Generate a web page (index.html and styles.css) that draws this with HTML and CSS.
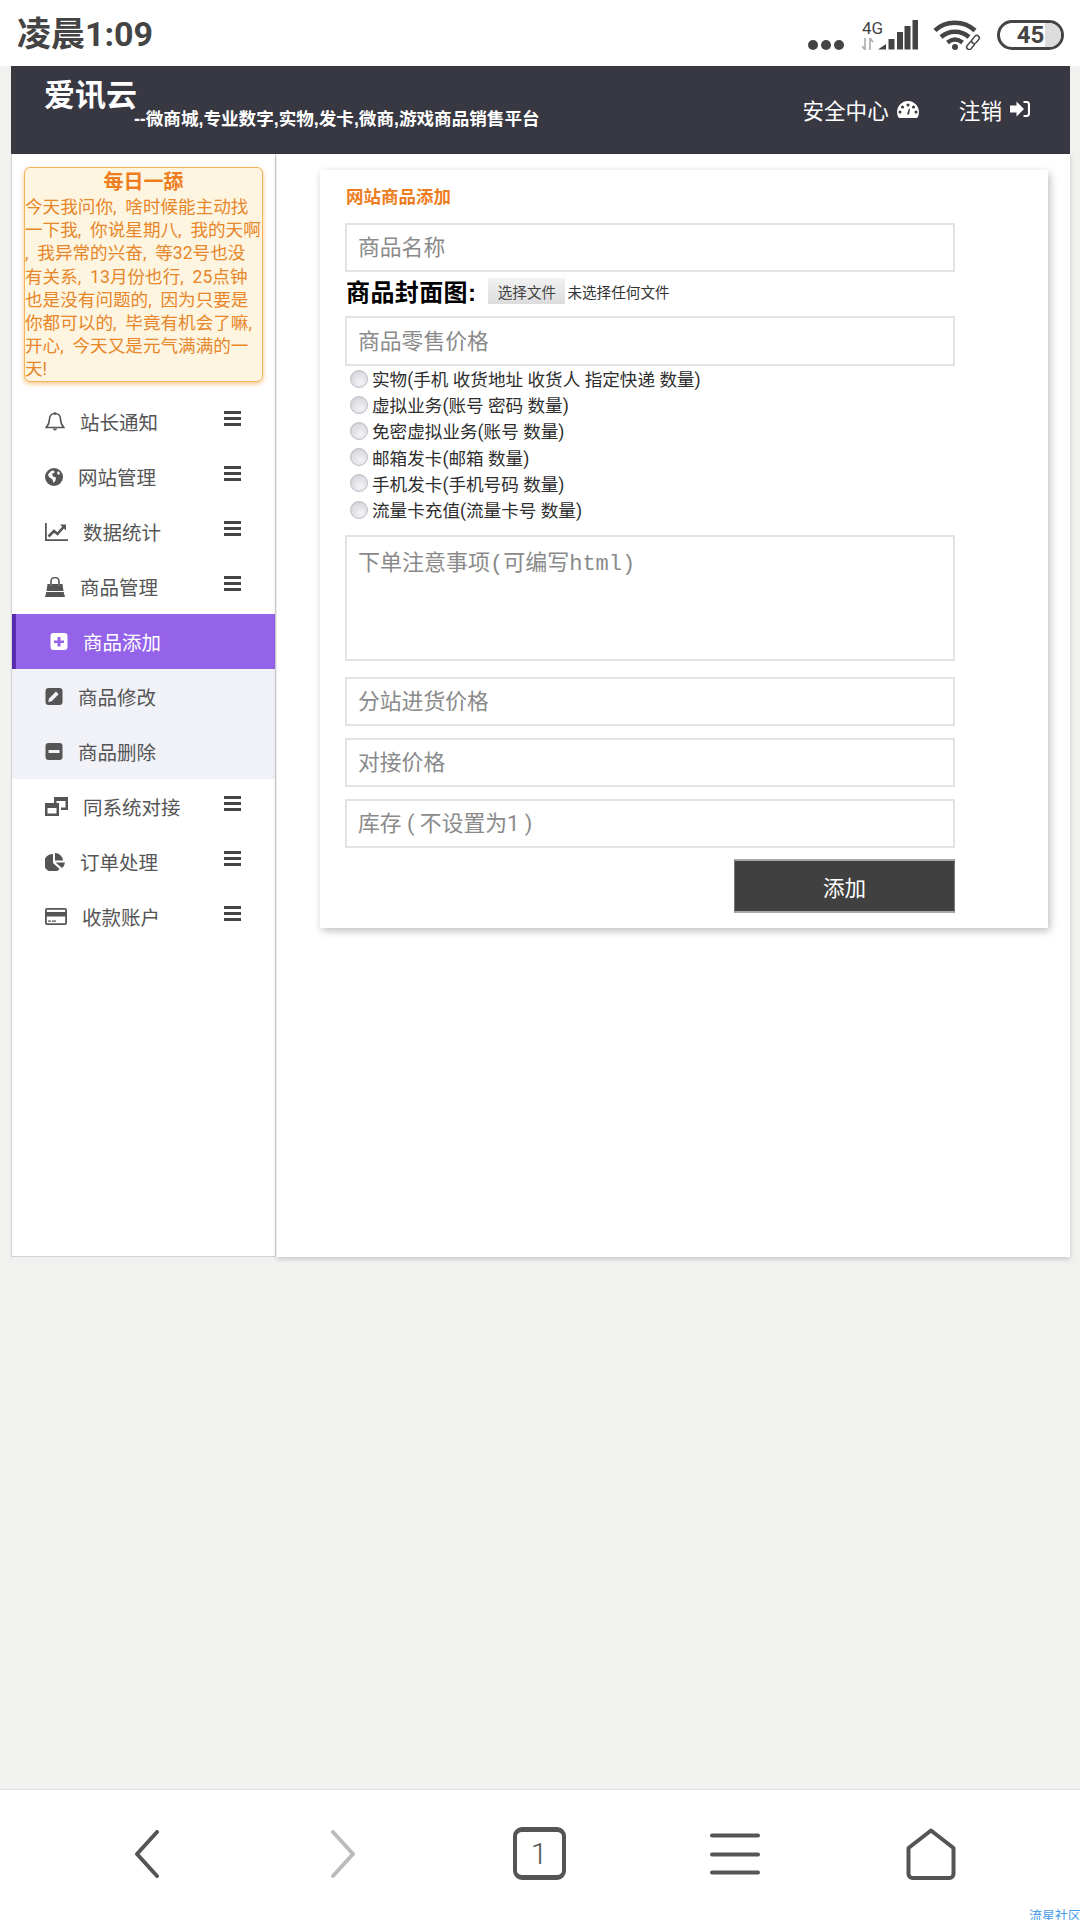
FILE: index.html
```html
<!DOCTYPE html>
<html lang="zh-CN">
<head>
<meta charset="utf-8">
<title>网站商品添加</title>
<link rel="stylesheet" href="styles.css">
</head>
<body>
<svg class="defs" width="0" height="0" aria-hidden="true">
  <symbol id="bars" viewBox="0 0 17 15"><path d="M0 0h17v3H0zM0 6h17v3H0zM0 12h17v3H0z"/></symbol>
</svg>

<div class="status">
  <div class="clock">凌晨1:09</div>
  <div class="status-icons">
    <svg class="dots" viewBox="0 0 36 10"><circle cx="5" cy="5" r="5"/><circle cx="18" cy="5" r="5"/><circle cx="31" cy="5" r="5"/></svg>
    <div class="net">
      <div class="net-left">
        <span class="g4">4G</span>
        <svg class="arrows" viewBox="0 0 12 12"><path d="M3 0v12L0 8M8 12V0l3 4" fill="none" stroke="#aaa" stroke-width="1.6"/></svg>
      </div>
      <svg class="signal" viewBox="0 0 40 30"><path d="M0 29.500 8 24v5.500zM10.500 19h6v10.500h-6zM19 12h6v17.500h-6zM26.500 6h6v23.500h-6zM34.500 0h5.500v29.500h-5.500z"/></svg>
    </div>
    <svg class="wifi" viewBox="0 0 48 30">
      <g fill="none" stroke="#444" stroke-width="4.500">
        <path d="M2 10.500C12 0 31 0 42 10.500"/>
        <path d="M8 17c8-7 20-7 28 0"/>
        <path d="M14.500 22.500c5-4 10-4 15 0"/>
      </g>
      <circle cx="22" cy="27" r="3" fill="#444"/>
      <g fill="#fff" stroke="#444" stroke-width="1.500">
        <rect x="33" y="23" width="9" height="5" rx="2.500" transform="rotate(-50 37.500 25.500)"/>
        <rect x="38" y="17" width="9" height="5" rx="2.500" transform="rotate(-50 42.500 19.500)"/>
      </g>
    </svg>
    <div class="battery"><span class="battery-fill"></span><span class="battery-num">45</span></div>
  </div>
</div>

<div class="content">
  <div class="app">
    <header class="topbar">
      <div class="brand">
        <span class="brand-name">爱讯云</span><span class="brand-sub">--微商城,专业数字,实物,发卡,微商,游戏商品销售平台</span>
      </div>
      <nav class="top-links">
        <a class="top-link">安全中心
          <svg class="ti ti-dash" viewBox="0 0 22 17"><path fill-rule="evenodd" d="M11 0a11 11 0 0 1 9.500 16.500 1 1 0 0 1-.9.500H2.400a1 1 0 0 1-.9-.500A11 11 0 0 1 11 0zM11 2.500a1.500 1.500 0 1 0 0 3 1.500 1.500 0 0 0 0-3zM5.500 4.500a1.500 1.500 0 1 0 0 3 1.500 1.500 0 0 0 0-3zM16.500 4.500a1.500 1.500 0 1 0 0 3 1.500 1.500 0 0 0 0-3zM3 9.500a1.500 1.500 0 1 0 0 3 1.500 1.500 0 0 0 0-3zM19 9.500a1.500 1.500 0 1 0 0 3 1.500 1.500 0 0 0 0-3zM10 13.500h2L13 8l-1.200-.2z"/></svg>
        </a>
        <a class="top-link">注销
          <svg class="ti ti-sign" viewBox="0 0 20 16"><path d="M0 4.500h6.500V.5L14 8l-7.500 7.500v-4H0z"/><path d="M13.500 1h3A2.500 2.500 0 0 1 19 3.500v9a2.500 2.500 0 0 1-2.500 2.500h-3" fill="none" stroke="#fff" stroke-width="2.200"/></svg>
        </a>
      </nav>
    </header>

    <div class="workspace">
      <aside class="sidebar">
        <div class="notice">
          <div class="notice-title">每日一舔</div>
          <p class="notice-text">今天我问你, 啥时候能主动找<br>一下我, 你说星期八, 我的天啊<br>, 我异常的兴奋, 等32号也没<br>有关系, 13月份也行, 25点钟<br>也是没有问题的, 因为只要是<br>你都可以的, 毕竟有机会了嘛,<br>开心, 今天又是元气满满的一<br>天!</p>
        </div>
        <ul class="menu">
          <li class="item">
            <svg class="ic ic-bell" viewBox="0 0 20 20"><path d="M10 1.500c-3.500 0-5.500 2.500-5.500 5.500 0 4.500-1.500 6.500-3.300 8.500h17.600c-1.800-2-3.300-4-3.300-8.500 0-3-2-5.500-5.500-5.500z" fill="none" stroke="#555" stroke-width="1.600"/><path d="M8 16.500a2 2 0 0 0 4 0z"/><circle cx="10" cy="1.500" r="1.300"/></svg>
            <span>站长通知</span><svg class="bars"><use href="#bars"/></svg>
          </li>
          <li class="item">
            <svg class="ic ic-globe" viewBox="0 0 18 18"><circle cx="9" cy="9" r="9"/><path fill="#fff" d="M3 6.500 6 3l3-.5.500 2L7 6l1 2.500 3 1-.5 3-2 2.500-1-3.500L4 9zM13 3l2 2-1 2-2-1.500z"/></svg>
            <span>网站管理</span><svg class="bars"><use href="#bars"/></svg>
          </li>
          <li class="item">
            <svg class="ic ic-chart" viewBox="0 0 23 18"><path d="M0 0h1.800v16.200H23V18H0z"/><path d="M3.500 13.500 9 8l3.500 3 6-7" fill="none" stroke="#555" stroke-width="2.600"/><path d="M15 1.500h6v6z"/></svg>
            <span>数据统计</span><svg class="bars"><use href="#bars"/></svg>
          </li>
          <li class="item">
            <svg class="ic ic-bag" viewBox="0 0 20 20"><path d="M2.500 7h3v1.500h1V7h7v1.500h1V7h3l1 7H1.500zM1.300 15h17.400l1.300 5H0z"/><path d="M6 8V4.500a4 4 0 0 1 8 0V8" fill="none" stroke="#555" stroke-width="1.600"/></svg>
            <span>商品管理</span><svg class="bars"><use href="#bars"/></svg>
          </li>
          <li class="item active">
            <svg class="ic ic-sq" viewBox="0 0 17 17"><path fill-rule="evenodd" d="M3 0h11a3 3 0 0 1 3 3v11a3 3 0 0 1-3 3H3a3 3 0 0 1-3-3V3a3 3 0 0 1 3-3zM7 4v3.500H3.500v2.500H7v3.500h3V10h3.500V7.500H10V4z"/></svg>
            <span>商品添加</span>
          </li>
          <li class="item sub">
            <svg class="ic ic-sq" viewBox="0 0 17 17"><path fill-rule="evenodd" d="M3 0h11a3 3 0 0 1 3 3v11a3 3 0 0 1-3 3H3a3 3 0 0 1-3-3V3a3 3 0 0 1 3-3zM10.500 3.500 3.500 10.500l-.8 3.500 3.500-.8 7-7z"/></svg>
            <span>商品修改</span>
          </li>
          <li class="item sub">
            <svg class="ic ic-sq" viewBox="0 0 17 17"><path fill-rule="evenodd" d="M3 0h11a3 3 0 0 1 3 3v11a3 3 0 0 1-3 3H3a3 3 0 0 1-3-3V3a3 3 0 0 1 3-3zM3 7v3h11V7z"/></svg>
            <span>商品删除</span>
          </li>
          <li class="item">
            <svg class="ic ic-win" viewBox="0 0 23 19"><path fill-rule="evenodd" d="M9 0h14v13h-7V10.500h4.500V4h-9v2H9z"/><path fill-rule="evenodd" d="M0 6h14v13H0zM2.500 11v5.500h9V11z"/></svg>
            <span>同系统对接</span><svg class="bars"><use href="#bars"/></svg>
          </li>
          <li class="item">
            <svg class="ic ic-pie" viewBox="0 0 20 18"><path d="M8 1V10l6.500 6A9 9 0 1 1 8 1z"/><path d="M10 0a8 8 0 0 1 8 7.500h-8zM10.500 9.500H20a8 8 0 0 1-3 5.500z"/></svg>
            <span>订单处理</span><svg class="bars"><use href="#bars"/></svg>
          </li>
          <li class="item">
            <svg class="ic ic-card" viewBox="0 0 22 17"><path fill-rule="evenodd" d="M2 0h18a2 2 0 0 1 2 2v13a2 2 0 0 1-2 2H2a2 2 0 0 1-2-2V2a2 2 0 0 1 2-2zM1.800 8.500V15a.3.3 0 0 0 .2.2h18a.3.3 0 0 0 .2-.2V8.500zM1.800 2v2h18.400V2a.3.3 0 0 0-.2-.2H2a.3.3 0 0 0-.2.2zM3 12.500h3v1.200H3zM7 12.500h4v1.200H7z"/></svg>
            <span>收款账户</span><svg class="bars"><use href="#bars"/></svg>
          </li>
        </ul>
      </aside>

      <main class="main">
        <section class="card">
          <h2 class="card-title">网站商品添加</h2>
          <form class="form">
            <input class="field" type="text" placeholder="商品名称">
            <div class="file-row">
              <label class="file-label">商品封面图:</label>
              <button class="file-btn" type="button">选择文件</button>
              <span class="file-name">未选择任何文件</span>
            </div>
            <input class="field tall" type="text" placeholder="商品零售价格">
            <div class="radios">
              <label class="radio"><input type="radio" name="kind"><span>实物(手机 收货地址 收货人 指定快递 数量)</span></label>
              <label class="radio"><input type="radio" name="kind"><span>虚拟业务(账号 密码 数量)</span></label>
              <label class="radio"><input type="radio" name="kind"><span>免密虚拟业务(账号 数量)</span></label>
              <label class="radio"><input type="radio" name="kind"><span>邮箱发卡(邮箱 数量)</span></label>
              <label class="radio"><input type="radio" name="kind"><span>手机发卡(手机号码 数量)</span></label>
              <label class="radio"><input type="radio" name="kind"><span>流量卡充值(流量卡号 数量)</span></label>
            </div>
            <textarea class="field area" placeholder="下单注意事项(可编写html)"></textarea>
            <input class="field gap-16" type="text" placeholder="分站进货价格">
            <input class="field" type="text" placeholder="对接价格">
            <input class="field" type="text" placeholder="库存 ( 不设置为1 )">
            <button class="submit" type="button">添加</button>
          </form>
        </section>
      </main>
    </div>
  </div>
</div>

<footer class="bottom-nav">
  <svg class="nv nv-arrow" viewBox="0 0 26 48"><path d="M23 2 3 24l20 22" fill="none" stroke="#555" stroke-width="4" stroke-linecap="round" stroke-linejoin="round"/></svg>
  <svg class="nv nv-arrow" viewBox="0 0 26 48"><path d="M3 2l20 22L3 46" fill="none" stroke="#bbb" stroke-width="4" stroke-linecap="round" stroke-linejoin="round"/></svg>
  <div class="tab-count">1</div>
  <svg class="nv nv-menu" viewBox="0 0 50 42"><path d="M2 2.500h46M2 21.500h46M2 39.500h46" fill="none" stroke="#555" stroke-width="4" stroke-linecap="round"/></svg>
  <svg class="nv nv-home" viewBox="0 0 50 52"><path d="M25 2.500 47.500 20v26a4 4 0 0 1-4 4h-37a4 4 0 0 1-4-4V20z" fill="none" stroke="#555" stroke-width="4" stroke-linejoin="round"/></svg>
  <span class="watermark">流星社区</span>
</footer>
</body>
</html>
```

FILE: styles.css
```css
* { box-sizing: border-box; }
html, body { margin: 0; padding: 0; }
body {
  width: 1080px;
  height: 1920px;
  display: flex;
  flex-direction: column;
  overflow: hidden;
  background: #f1f1ef;
  color: #444;
  font-family: Roboto, "Noto Sans CJK SC", sans-serif;
}
.defs { position: absolute; }

/* status bar */
.status {
  height: 66px;
  flex: none;
  background: #fff;
  display: flex;
  align-items: center;
  justify-content: space-between;
  padding: 0 16px 0 17px;
}
.clock { font-size: 34px; font-weight: 700; color: #444; line-height: 66px; margin-top: 2px; }
.status-icons { display: flex; align-items: flex-end; height: 30px; margin-top: 3px; }
.dots { width: 36px; height: 10px; fill: #444; }
.net { display: flex; align-items: flex-end; margin-left: 18px; height: 30px; }
.net-left { width: 26px; display: flex; flex-direction: column; align-items: flex-start; }
.g4 { font-size: 17px; line-height: 17px; color: #444; }
.arrows { width: 12px; height: 12px; margin-top: 1px; }
.signal { width: 40px; height: 30px; fill: #444; margin-left: -10px; }
.wifi { width: 48px; height: 30px; margin-left: 15px; }
.battery {
  position: relative;
  width: 67px;
  height: 30px;
  margin-left: 16px;
  border: 3px solid #444;
  border-radius: 15px;
  overflow: hidden;
  text-align: center;
}
.battery-fill { position: absolute; right: 0; top: 0; bottom: 0; width: 16px; background: #ddd; }
.battery-num { position: relative; font-size: 24px; font-weight: 700; line-height: 24px; color: #444; }

/* page */
.content { flex: 1; padding: 0 10px 0 11px; }
.app { height: 1191px; display: flex; flex-direction: column; }
.topbar {
  height: 88px;
  flex: none;
  background: #383843;
  color: #fff;
  display: flex;
  justify-content: space-between;
  padding: 0 40px 0 33px;
}
.brand { display: flex; align-items: flex-start; }
.brand-name { font-size: 31px; font-weight: 700; line-height: 44px; margin-top: 8px; }
.brand-sub { font-size: 17.6px; font-weight: 700; line-height: 24px; margin: 41px 0 0 -3px; font-family: "Liberation Sans", "Noto Sans CJK SC", sans-serif; }
.top-links { display: flex; gap: 40px; align-items: center; margin-top: -2px; }
.top-link { display: flex; align-items: center; gap: 8px; font-size: 21.6px; color: #fff; }
.ti { fill: #fff; }
.ti-dash { width: 22px; height: 17px; }
.ti-sign { width: 20px; height: 16px; }

.workspace { flex: 1; display: flex; background: #fff; min-height: 0; }

/* sidebar */
.sidebar {
  width: 265px;
  flex: none;
  background: #fff;
  border: 1px solid #d2d2d2;
  border-top: 0;
}
.notice {
  margin: 13px 12px 12px;
  height: 215px;
  background: #fdf5e0;
  border: 1px solid #f5b45a;
  border-radius: 6px;
  box-shadow: 0 2px 5px rgba(240, 150, 50, .55);
  color: #e8862a;
}
.notice-title { text-align: center; font-size: 20px; font-weight: 700; line-height: 28px; color: #ee7d1e; }
.notice-text { margin: 0; font-size: 17.6px; line-height: 23.2px; white-space: nowrap; word-spacing: 4.5px; }

.menu { list-style: none; margin: 0; padding: 0; }
.item {
  height: 55px;
  display: flex;
  align-items: center;
  gap: 15px;
  padding: 0 34px 0 33px;
  font-size: 19.5px;
  color: #555;
}
.item .ic { fill: #555; flex: none; }
.bars { width: 17px; height: 15px; fill: #444; margin-left: auto; margin-bottom: 7px; flex: none; }
.ic-bell { width: 20px; height: 20px; }
.ic-globe { width: 18px; height: 18px; }
.ic-chart { width: 23px; height: 18px; }
.ic-bag { width: 20px; height: 20px; }
.ic-sq { width: 18px; height: 17px; }
.ic-win { width: 23px; height: 19px; }
.ic-pie { width: 20px; height: 18px; }
.ic-card { width: 22px; height: 17px; }
.active { background: #9463ea; color: #fff; border-left: 4px solid #5a2bb0; padding-left: 34px; }
.item.active .ic { fill: #fff; }
.sub { background: #f1f2f8; }

/* main */
.main {
  flex: 1;
  margin-left: 1px;
  padding: 16px 22px 0 43px;
  box-shadow: 0 2px 5px rgba(0, 0, 0, .18);
}
.card {
  background: #fff;
  height: 758px;
  padding: 16px 25px 0;
  box-shadow: 2px 3px 8px rgba(0, 0, 0, .25);
}
.card-title { margin: 0; padding-left: 1px; font-size: 17.5px; font-weight: 700; line-height: 22px; color: #ee7d1e; font-family: "Liberation Sans", "Noto Sans CJK SC", sans-serif; }
.form { width: 610px; margin-top: 15px; display: flex; flex-direction: column; }
.field {
  display: block;
  width: 100%;
  height: 49px;
  flex: none;
  padding: 0 11px;
  border: 2px solid #e3e3e3;
  background: #fff;
  font-size: 21.8px;
  font-family: Roboto, "Noto Sans CJK SC", sans-serif;
  color: #333;
  outline: 0;
  border-radius: 0;
}
.field + .field { margin-top: 12px; }
.field.tall { height: 50px; }
.field::placeholder { color: #8a8a8a; opacity: 1; }
.field.area {
  height: 126px;
  margin-top: 11px;
  padding: 7px 11px;
  resize: none;
  font-size: 22px;
  font-family: "Liberation Mono", "Noto Sans CJK SC", monospace;
}
.field.gap-16 { margin-top: 16px; }
.file-row { height: 44px; display: flex; align-items: center; padding: 0 0 7px 1px; }
.file-label { font-size: 24px; font-weight: 700; color: #000; letter-spacing: .4px; font-family: "Liberation Sans", "Noto Sans CJK SC", sans-serif; }
.file-btn {
  width: 77px;
  height: 26px;
  margin: 1px 0 0 12px;
  padding: 0;
  border: 0;
  background: linear-gradient(#f2f2f2, #dcdcdc);
  font-size: 14.6px;
  font-family: Roboto, "Noto Sans CJK SC", sans-serif;
  color: #444;
}
.file-name { margin: 1px 0 0 2px; font-size: 14.6px; color: #333; }
.radios { display: flex; flex-direction: column; margin-top: 1px; }
.radio { height: 26.2px; display: flex; align-items: center; padding-left: 5px; gap: 4px; font-size: 17.6px; line-height: 24px; color: #2e2e2e; }
.radio input {
  appearance: none;
  -webkit-appearance: none;
  width: 18px;
  height: 18px;
  margin: -3px 0 0;
  border: 1px solid #bdbdc6;
  border-radius: 50%;
  background: radial-gradient(circle at 60% 70%, #f4f4f6 0, #dcdce2 60%, #c8c8d0 100%);
  flex: none;
}
.submit {
  align-self: flex-end;
  width: 221px;
  height: 54px;
  margin-top: 11px;
  background: #404040;
  border-style: solid;
  border-color: #a9a9a9 #777;
  border-width: 2px 1px;
  color: #fff;
  font-size: 21.6px;
  font-family: Roboto, "Noto Sans CJK SC", sans-serif;
}

/* browser bottom bar */
.bottom-nav {
  position: relative;
  height: 131px;
  flex: none;
  background: #fff;
  border-top: 1px solid #e2e2e2;
  display: grid;
  grid-template-columns: repeat(5, 196px);
  align-items: center;
  justify-items: center;
  padding: 0 0 3px 49px;
}
.nv-arrow { width: 26px; height: 48px; }
.nv-menu { width: 50px; height: 42px; }
.nv-home { width: 50px; height: 52px; }
.tab-count {
  width: 53px;
  height: 53px;
  border: 4px solid #555;
  border-top-width: 5px;
  border-bottom-width: 5px;
  border-radius: 9px;
  text-align: center;
  font-size: 30px;
  line-height: 43px;
  font-weight: 300;
  color: #555;
}
.watermark {
  position: absolute;
  left: 1029px;
  top: 118px;
  font-size: 13px;
  line-height: 16px;
  color: #4a9be8;
  white-space: nowrap;
}
```
